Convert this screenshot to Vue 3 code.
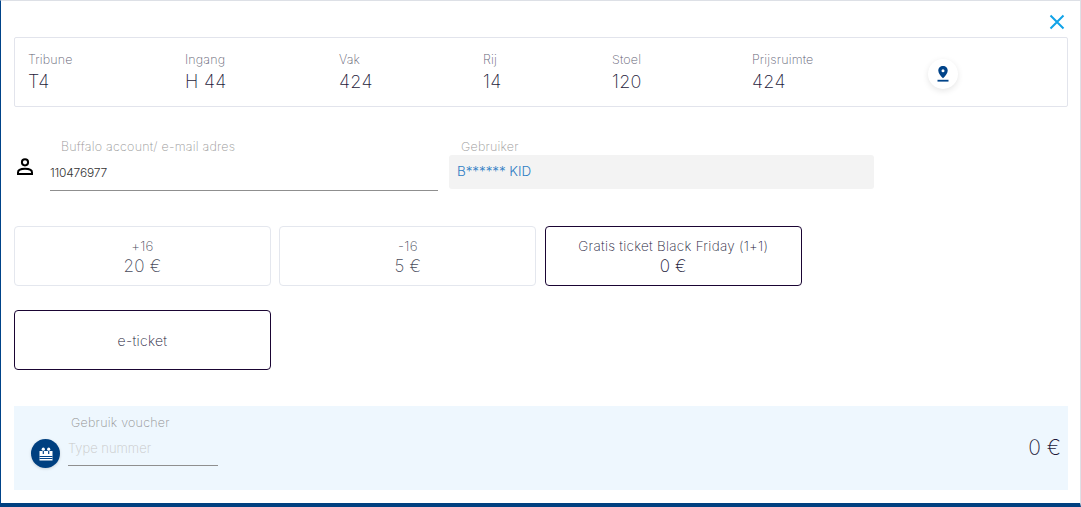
<script setup>
const seat = [
  { label: 'Tribune', value: 'T4' },
  { label: 'Ingang', value: 'H 44' },
  { label: 'Vak', value: '424' },
  { label: 'Rij', value: '14' },
  { label: 'Stoel', value: '120' },
  { label: 'Prijsruimte', value: '424' },
]
const tickets = [
  { name: '+16', price: '20 €' },
  { name: '-16', price: '5 €' },
  { name: 'Gratis ticket Black Friday (1+1)', price: '0 €', active: true },
]
</script>

<template>
  <div class="modal">
    <div class="top">
      <svg class="close" width="16" height="16" viewBox="0 0 16 16" aria-label="Sluiten">
        <path d="M1.500 1.500 14.500 14.500M14.500 1.500 1.500 14.500" fill="none" stroke="#11a3e8" stroke-width="2" />
      </svg>
    </div>

    <section class="seat">
      <div v-for="item in seat" :key="item.label" class="seat-item">
        <span class="seat-label">{{ item.label }}</span>
        <span class="seat-value">{{ item.value }}</span>
      </div>
      <div class="pin">
        <svg width="14" height="16" viewBox="0 0 14 16">
          <path fill-rule="evenodd" d="M7 0C4.200 0 2.300 2.100 2.300 4.700 2.300 7.400 5 10.300 7 12.200 9 10.300 11.700 7.400 11.700 4.700 11.700 2.100 9.800 0 7 0ZM7 3.300A1.500 1.500 0 1 1 7 6.300 1.500 1.500 0 0 1 7 3.300Z" fill="#004389" />
          <rect x="1.500" y="13.800" width="11" height="1.800" fill="#004389" />
        </svg>
      </div>
    </section>

    <section class="account">
      <svg class="person" width="18" height="18" viewBox="0 0 18 18">
        <circle cx="9" cy="4.300" r="3.100" fill="none" stroke="#000" stroke-width="2" />
        <path d="M2 16V14.400C2 12 5.500 10.800 9 10.800S16 12 16 14.400V16Z" fill="none" stroke="#000" stroke-width="2" />
      </svg>
      <div class="account-field">
        <label class="field-label indented">Buffalo account/ e-mail adres</label>
        <div class="account-input">110476977</div>
      </div>
      <div class="user-field">
        <label class="field-label user-label">Gebruiker</label>
        <div class="user-box">B****** KID</div>
      </div>
    </section>

    <section class="tickets">
      <div v-for="t in tickets" :key="t.name" class="ticket" :class="{ active: t.active }">
        <span class="ticket-name">{{ t.name }}</span>
        <span class="ticket-price">{{ t.price }}</span>
      </div>
    </section>

    <section class="delivery">
      <div class="ticket active single">e-ticket</div>
    </section>

    <section class="voucher">
      <div class="gift">
        <svg width="16" height="16" viewBox="0 0 16 16">
          <path d="M1.500 5H14.500V14.500H1.500Z" fill="#fff" />
          <path d="M1.500 10.500H14.500M1.500 12.500H14.500" stroke="#004389" stroke-width="1" />
          <circle cx="5.300" cy="3.200" r="1.600" fill="#fff" />
          <circle cx="10.700" cy="3.200" r="1.600" fill="#fff" />
          <path d="M5.300 5V8M10.700 5V8" stroke="#004389" stroke-width="1.200" />
        </svg>
      </div>
      <div class="voucher-field">
        <label class="voucher-label">Gebruik voucher</label>
        <div class="voucher-input">Type nummer</div>
      </div>
      <div class="total">0 €</div>
    </section>
  </div>
</template>

<style>
html, body { margin: 0; background: #fff; }
</style>

<style scoped>
.modal {
  box-sizing: border-box;
  width: 1081px;
  height: 507px;
  padding: 0 12px 0 13px;
  background: #fff;
  border-top: 1px solid #dde0e6;
  border-left: 1px solid #004389;
  border-right: 1px solid #dde0e6;
  border-bottom: 4px solid #004080;
  font-family: Inter, "Open Sans", sans-serif;
  font-weight: 200;
  color: #1d1a3a;
  overflow: hidden;
}
.top {
  display: flex;
  justify-content: flex-end;
  height: 36px;
  padding-top: 13px;
  box-sizing: border-box;
}
.close { margin-right: 3px; }
.seat {
  box-sizing: border-box;
  height: 70px;
  display: grid;
  grid-template-columns: 157px 154px 144px 129px 140px 176px 30px;
  align-items: start;
  padding: 14px 13px;
  border: 1px solid #e2e4ec;
  border-radius: 2px;
}
.seat-item { display: flex; flex-direction: column; }
.seat-label { font-size: 12.500px; line-height: 16px; color: #5f6374; letter-spacing: 0.15px; }
.seat-value { font-size: 18px; line-height: 27px; color: #1d1a3a; letter-spacing: 0.3px; }
.pin {
  width: 30px;
  height: 30px;
  margin-top: 7px;
  border-radius: 50%;
  background: #fff;
  box-shadow: 0 2px 6px rgba(0, 0, 0, 0.1);
  display: flex;
  align-items: center;
  justify-content: center;
}
.account {
  display: flex;
  margin-top: 31px;
  height: 53px;
}
.person { margin: 20px 0 0 2px; }
.account-field { width: 388px; margin-left: 16px; }
.field-label {
  display: block;
  font-size: 12.500px;
  line-height: 17px;
  color: #999;
  letter-spacing: 0.22px;
}
.indented { padding-left: 11px; }
.account-input {
  box-sizing: border-box;
  height: 36px;
  padding-top: 9px;
  border-bottom: 1px solid #8f8f8f;
  font-size: 12px;
  line-height: 18px;
  font-weight: 300;
  letter-spacing: -0.2px;
  color: #333;
}
.user-field { width: 425px; margin-left: 11px; }
.user-label { padding-left: 12px; }
.user-box {
  box-sizing: border-box;
  height: 34px;
  padding: 0 8px;
  line-height: 33px;
  background: #f3f3f3;
  border-radius: 3px;
  font-size: 13.500px;
  font-weight: 300;
  letter-spacing: -0.1px;
  color: #2f7dc4;
}
.tickets {
  display: grid;
  grid-template-columns: repeat(3, 257px);
  column-gap: 8.400px;
  margin-top: 35px;
}
.ticket {
  box-sizing: border-box;
  height: 60px;
  display: flex;
  flex-direction: column;
  align-items: center;
  justify-content: center;
  border: 1px solid #e4e7ee;
  border-radius: 4px;
  color: #4a4c5c;
}
.ticket.active { border-color: #1a0533; color: #1d1a3a; }
.ticket-name { font-size: 13.500px; line-height: 20px; letter-spacing: 0.27px; }
.ticket-price { font-size: 17px; line-height: 21px; letter-spacing: 0.2px; }
.delivery { margin-top: 24px; }
.single { width: 257px; font-size: 14px; letter-spacing: 0.3px; }
.voucher {
  box-sizing: border-box;
  height: 84px;
  margin-top: 36px;
  padding: 0 7px 0 17px;
  display: flex;
  align-items: flex-start;
  background: #eef7fe;
}
.gift {
  width: 29px;
  height: 29px;
  margin-top: 33px;
  border-radius: 50%;
  background: #004080;
  display: flex;
  align-items: center;
  justify-content: center;
  box-shadow: 0 1px 3px rgba(0, 0, 0, 0.15);
}
.voucher-field { width: 150px; margin-left: 8px; padding-top: 8px; }
.voucher-label {
  display: block;
  padding-left: 3px;
  font-size: 12.500px;
  line-height: 17px;
  color: #909090;
  letter-spacing: 0.25px;
}
.voucher-input {
  box-sizing: border-box;
  height: 35px;
  padding-top: 9px;
  border-bottom: 1px solid #8f8f8f;
  font-size: 13px;
  line-height: 17px;
  color: #c8c8c8;
}
.total {
  margin-left: auto;
  margin-top: 29px;
  font-size: 21px;
  line-height: 26px;
  color: #1d1a3a;
}
</style>
